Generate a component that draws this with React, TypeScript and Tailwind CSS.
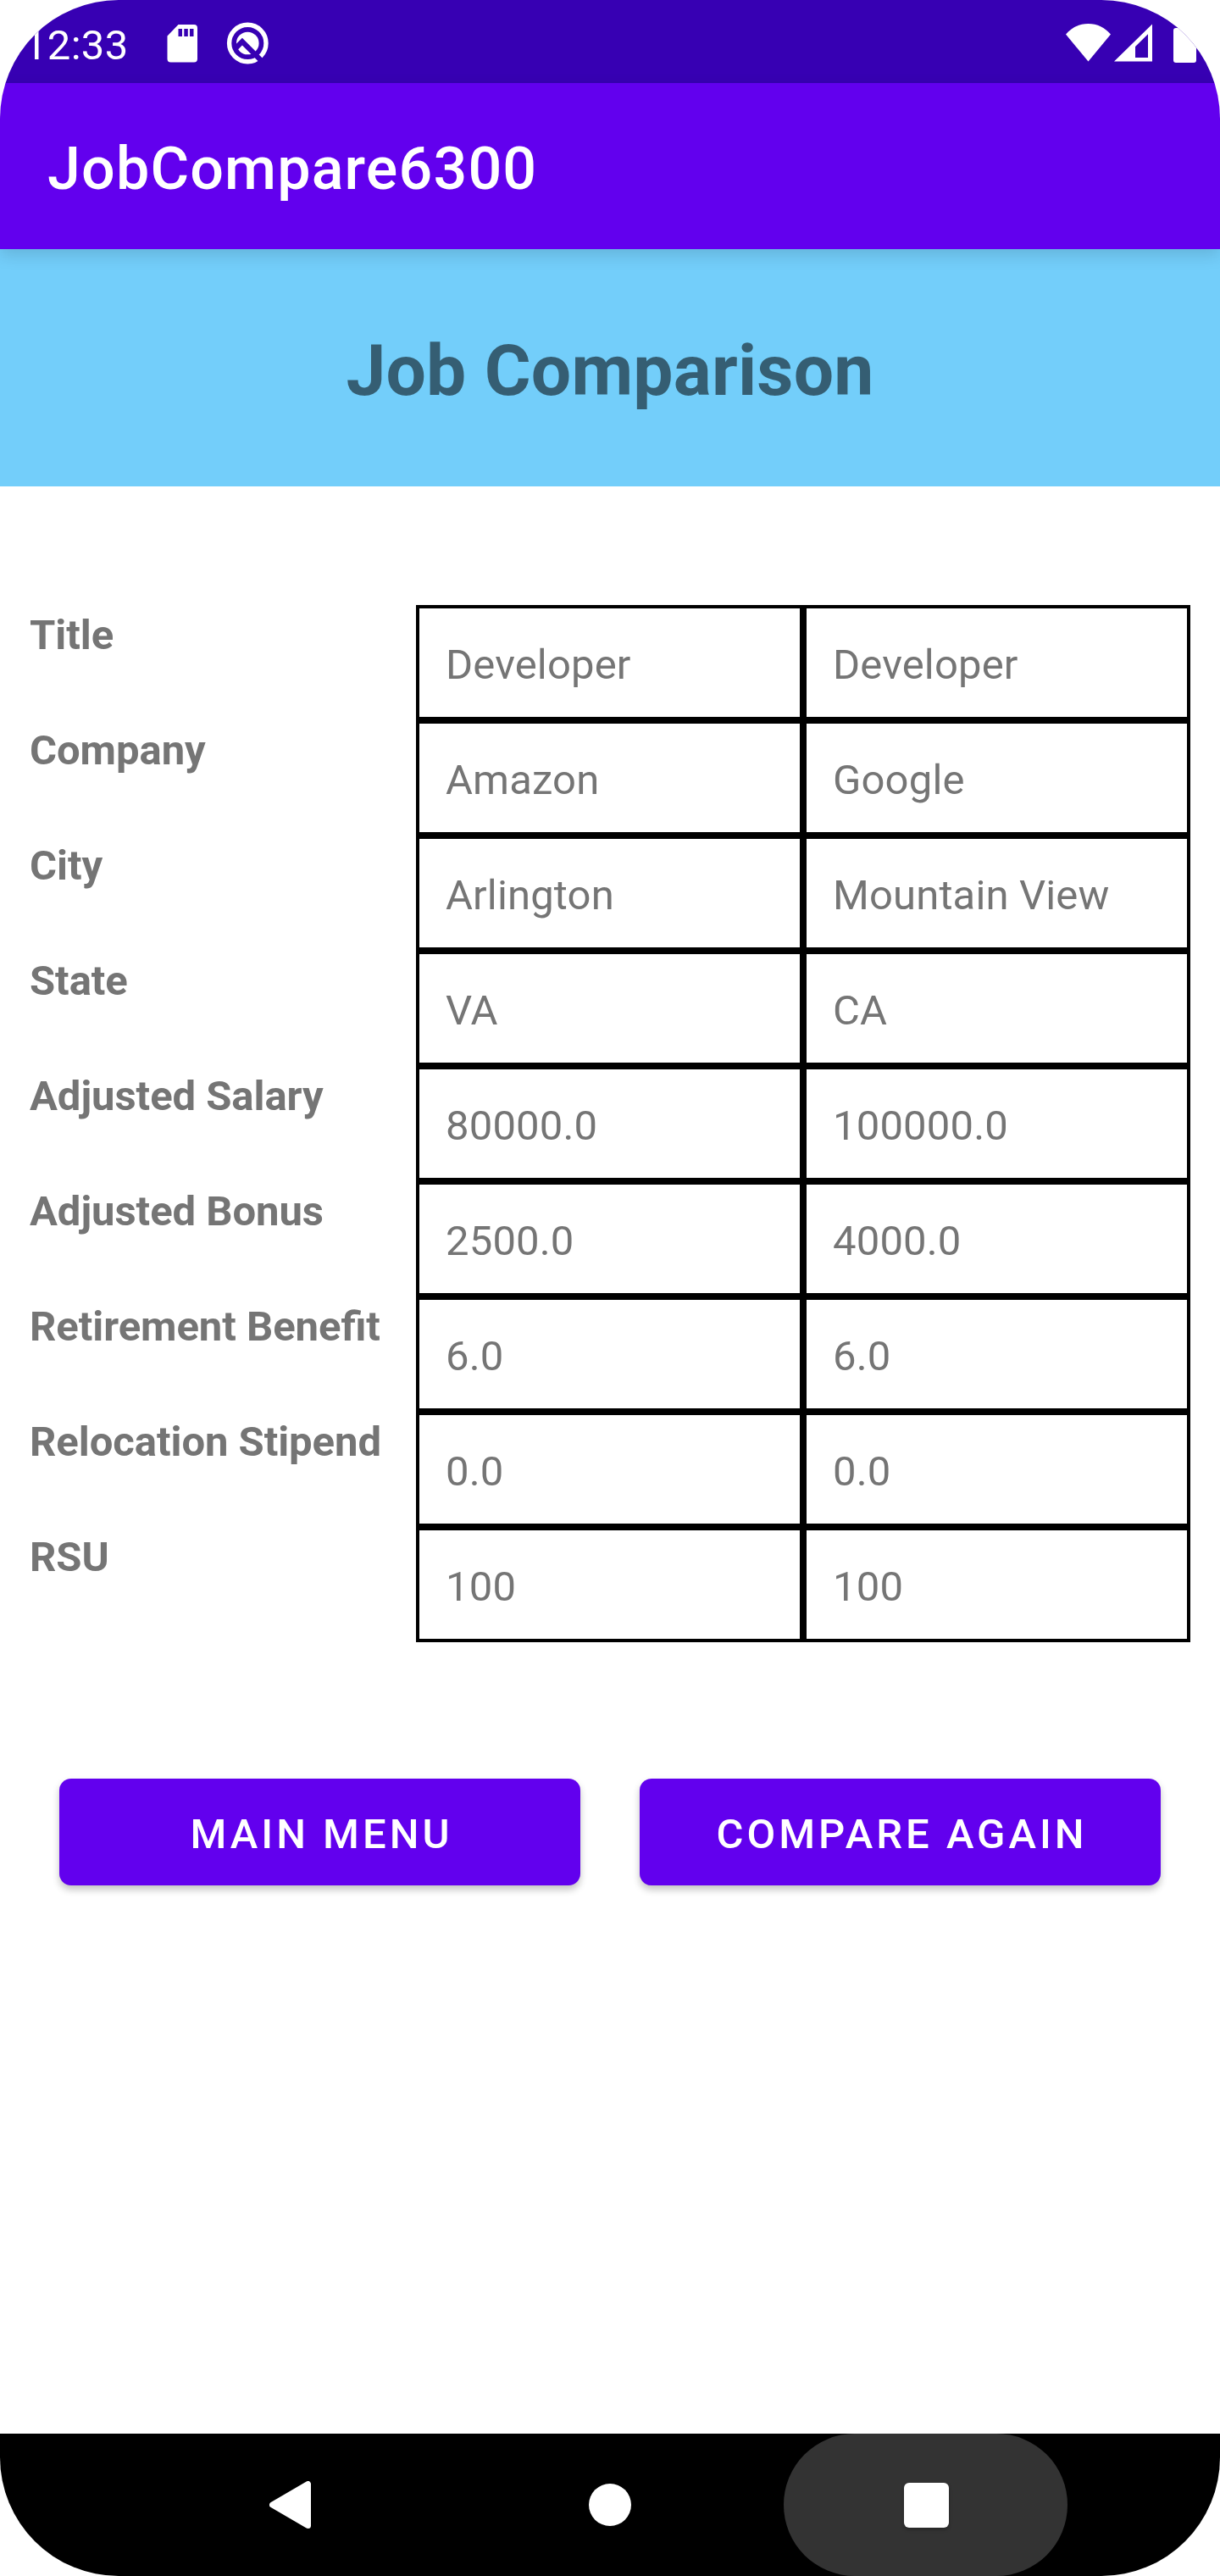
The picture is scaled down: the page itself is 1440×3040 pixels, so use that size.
const rows: [string, string, string][] = [
  ["Title", "Developer", "Developer"],
  ["Company", "Amazon", "Google"],
  ["City", "Arlington", "Mountain View"],
  ["State", "VA", "CA"],
  ["Adjusted Salary", "80000.0", "100000.0"],
  ["Adjusted Bonus", "2500.0", "4000.0"],
  ["Retirement Benefit", "6.0", "6.0"],
  ["Relocation Stipend", "0.0", "0.0"],
  ["RSU", "100", "100"],
];

function StatusBar() {
  return (
    <div className="flex h-[98px] items-start justify-between bg-[#3700b3] text-white">
      <div className="flex items-start">
        <span className="mt-[19px] ml-7 w-[122px] text-[49px] leading-[70px] tracking-[0.3px] whitespace-nowrap">12:33</span>
        <svg className="mt-[29px] ml-[47px]" width="37" height="45" viewBox="0 0 37 45" fill="currentColor">
          <path
            fillRule="evenodd"
            d="M13.5 0H32a4 4 0 0 1 4 4V40.500a4 4 0 0 1-4 4H4.500a4 4 0 0 1-4-4V13.500ZM13.500 5v9h4.500V5ZM20.300 5v9h4.500V5ZM27 5v9h4.500V5Z"
          />
        </svg>
        <svg className="mt-[26px] ml-[33px]" width="51" height="51" viewBox="0 0 51 51">
          <circle cx="25.300" cy="25" r="21.700" fill="none" stroke="#fff" strokeWidth="5.400" />
          <circle cx="25.300" cy="25" r="13.300" fill="#fff" />
          <path d="M11 31L18.900 23.100L46 50.200" fill="none" stroke="#3700b3" strokeWidth="6.200" />
        </svg>
      </div>
      <div className="flex items-start pr-[28px]">
        <svg className="mt-[28px]" width="53" height="45" viewBox="0 0 53 45" fill="currentColor">
          <path d="M0 12.500C7 4.500 16 0 26.500 0S46 4.500 53 12.500L26.500 44.500Z" />
        </svg>
        <svg className="mt-[28px] ml-[4px]" width="46" height="45" viewBox="0 0 46 45" fill="currentColor">
          <path fillRule="evenodd" d="M45 0.500V44.500H0ZM40 12.300L25 27V40H40Z" />
        </svg>
        <div className="mt-[33px] ml-[24px] h-[41px] w-[27px] rounded-[3px] bg-white" />
      </div>
    </div>
  );
}

function ActionButton({ label }: { label: string }) {
  return (
    <button className="h-[126px] w-[615px] rounded-[14px] bg-[#6200ee] pt-1 pl-[4px] text-[49px] leading-[57px] font-medium tracking-[4px] text-white shadow-[0_5px_8px_rgba(0,0,0,0.24)]">
      {label}
    </button>
  );
}

function NavigationBar() {
  return (
    <div className="flex h-[168px] items-center bg-black">
      <svg className="ml-[318px]" width="49" height="56" viewBox="0 0 49 56">
        <path d="M3.500 28L45.500 3.500V52.500Z" fill="#fff" stroke="#fff" strokeWidth="7" strokeLinejoin="round" />
      </svg>
      <div className="ml-[328px] size-[50px] rounded-full bg-white" />
      <div className="ml-[180px] flex h-[168px] w-[335px] items-center justify-center rounded-full bg-[#333333] pl-px">
        <div className="size-[53px] rounded-[6px] bg-white shadow-[0_2px_4px_rgba(0,0,0,0.3)]" />
      </div>
    </div>
  );
}

export default function App() {
  return (
    <div className="h-[3040px] w-[1440px] bg-white">
      <div className="flex h-[3040px] w-[1440px] flex-col overflow-hidden rounded-[140px] bg-white font-['Roboto',sans-serif]">
        <StatusBar />
        <header className="relative z-10 flex h-[196px] items-center bg-[#6200ee] pt-1.5 pl-14 shadow-[0_7px_18px_rgba(0,0,0,0.13)]">
          <h1 className="text-[70px] leading-[82px] font-medium tracking-[1.15px] text-white">JobCompare6300</h1>
        </header>
        <div className="flex h-[280px] items-center justify-center bg-[#73cefa] pt-2">
          <h2 className="text-[84px] leading-[98px] font-bold tracking-[0.2px] text-black/54">Job Comparison</h2>
        </div>
        <main className="flex-1 px-[35px] pt-[140px] text-[#757575]">
          <div className="grid auto-rows-[136px] grid-cols-[456px_457px_457px] text-[49px] leading-[72px] whitespace-nowrap">
            {rows.map(([label, first, second]) => (
              <div key={label} className="contents">
                <div className="font-bold tracking-[-0.05px] [font-feature-settings:'liga']">{label}</div>
                <div className="border-4 border-black pt-[31px] pl-[31px] tracking-[0.15px]">{first}</div>
                <div className="border-4 border-black pt-[31px] pl-[31px] tracking-[0.15px]">{second}</div>
              </div>
            ))}
          </div>
          <div className="mt-[161px] flex gap-[70px] pl-[35px]">
            <ActionButton label="MAIN MENU" />
            <ActionButton label="COMPARE AGAIN" />
          </div>
        </main>
        <NavigationBar />
      </div>
    </div>
  );
}
